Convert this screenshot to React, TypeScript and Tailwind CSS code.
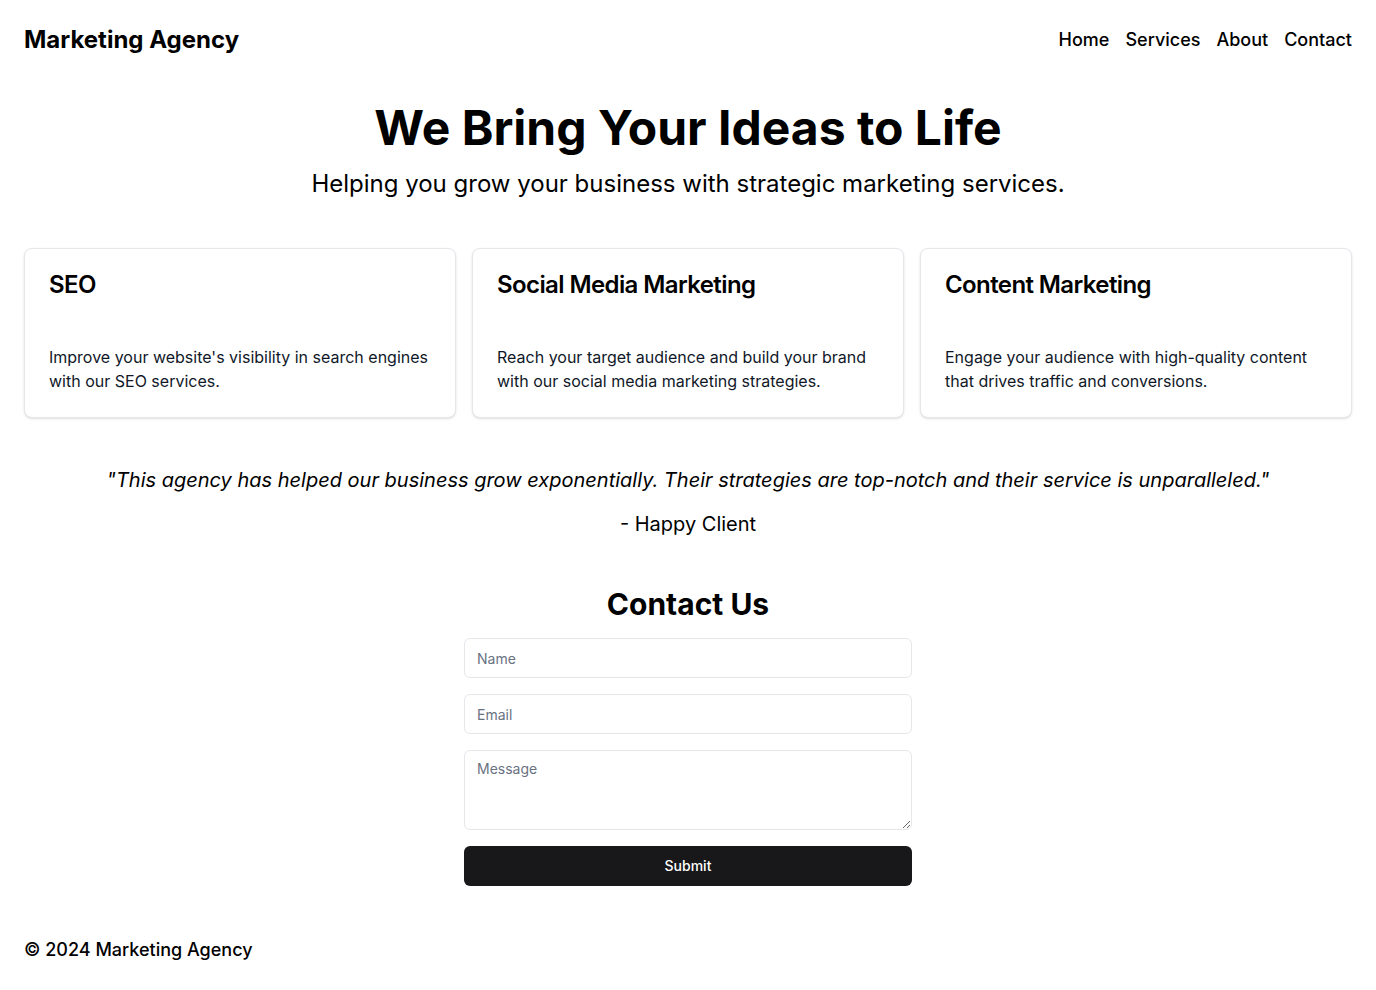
import React from "react";

const services = [
  {
    title: "SEO",
    text: "Improve your website's visibility in search engines with our SEO services.",
  },
  {
    title: "Social Media Marketing",
    text: "Reach your target audience and build your brand with our social media marketing strategies.",
  },
  {
    title: "Content Marketing",
    text: "Engage your audience with high-quality content that drives traffic and conversions.",
  },
];

const navLinks = ["Home", "Services", "About", "Contact"];

export default function App() {
  return (
    <div className="min-h-screen bg-white text-black font-['Inter',sans-serif]">
      {/* Header */}
      <header className="flex items-center justify-between px-6 py-6">
        <h1 className="text-2xl font-bold">Marketing Agency</h1>
        <nav className="flex space-x-4 text-lg font-medium">
          {navLinks.map((link) => (
            <a key={link} href="#">
              {link}
            </a>
          ))}
        </nav>
      </header>

      <main>
        {/* Hero */}
        <section className="px-6 py-6 text-center">
          <h2 className="text-5xl font-bold">We Bring Your Ideas to Life</h2>
          <p className="mt-4 text-2xl">
            Helping you grow your business with strategic marketing services.
          </p>
        </section>

        {/* Services */}
        <section className="grid grid-cols-3 gap-4 px-6 py-6">
          {services.map((s) => (
            <div
              key={s.title}
              className="rounded-lg border border-gray-200 bg-white shadow-sm"
            >
              <div className="p-6">
                <h3 className="text-2xl leading-none font-semibold tracking-tight">
                  {s.title}
                </h3>
              </div>
              <div className="px-6 pt-6 pb-6">
                <p className="text-base text-gray-900">{s.text}</p>
              </div>
            </div>
          ))}
        </section>

        {/* Testimonial */}
        <section className="px-6 py-6 text-center">
          <blockquote className="text-xl italic">
            "This agency has helped our business grow exponentially. Their strategies
            are top-notch and their service is unparalleled."
          </blockquote>
          <p className="mt-4 text-xl">- Happy Client</p>
        </section>

        {/* Contact */}
        <section className="px-6 py-6">
          <h2 className="mb-4 text-center text-3xl font-bold">Contact Us</h2>
          <form className="mx-auto max-w-md space-y-4">
            <input
              type="text"
              placeholder="Name"
              className="block h-10 w-full rounded-md border border-gray-200 px-3 text-sm placeholder:text-gray-500 focus:outline-none"
            />
            <input
              type="email"
              placeholder="Email"
              className="block h-10 w-full rounded-md border border-gray-200 px-3 text-sm placeholder:text-gray-500 focus:outline-none"
            />
            <textarea
              placeholder="Message"
              className="block h-20 w-full rounded-md border border-gray-200 px-3 py-2 text-sm placeholder:text-gray-500 focus:outline-none"
            />
            <button
              type="button"
              className="block h-10 w-full rounded-md bg-[#18181b] text-sm font-medium text-white"
            >
              Submit
            </button>
          </form>
        </section>
      </main>

      {/* Footer */}
      <footer className="px-6 pt-[26px] pb-[22px]">
        <p className="text-lg font-medium">© 2024 Marketing Agency</p>
      </footer>
    </div>
  );
}
